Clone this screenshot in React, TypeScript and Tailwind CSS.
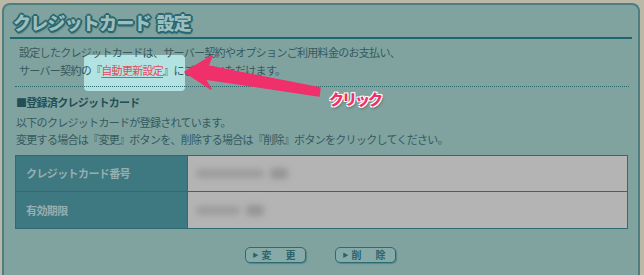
import React from 'react'

const font = '[font-family:"Noto_Sans_CJK_JP","Noto_Sans",sans-serif]'

function Blur({ w }: { w: number }) {
    return (
        <div className="flex items-center gap-[6px] blur-[3px]">
            <div className="h-[9px] bg-[#9c9c9c] rounded-sm" style={{ width: w }} />
            <div className="h-[11px] w-[18px] bg-[#959595] rounded-sm" />
        </div>
    )
}

export default function App() {
    return (
        <div className={`relative w-[644px] h-[275px] overflow-hidden bg-[#bcb8a7] pt-[3px] pl-[2px] pr-[4px] ${font}`}>
            <div className="relative h-[290px] rounded-t-[8px] border-2 border-b-0 border-[#4e7e82] bg-[#80a3a0]">
                {/* spotlight around the link */}
                <div className="absolute left-[80px] top-[50px] w-[101px] h-[36px] rounded-[4px] bg-[#b2e3e2]" />

                <div className="relative">
                    <h1 className="pl-[9px] pt-[5px] text-[18px] leading-[24px] font-black tracking-[-0.8px] text-[#9cbfbe] [text-shadow:2px_0_0_#2a6770,-2px_0_0_#2a6770,0_2px_0_#2a6770,0_-2px_0_#2a6770,1px_1px_0_#2a6770,-1px_-1px_0_#2a6770,1px_-1px_0_#2a6770,-1px_1px_0_#2a6770,1px_2px_2px_#2a6770]">
                        クレジットカード<span className="ml-[6px]">設定</span>
                    </h1>
                    <div className="mx-[6px] mt-[3px] h-[2px] bg-[#1c6670]" />

                    <div className="pl-[15px] mt-[4px] text-[11px] leading-[18px] tracking-[-0.7px] text-[#36595e]">
                        <p>設定したクレジットカードは、サーバー契約やオプションご利用料金のお支払い、</p>
                        <p>
                            サーバー契約の『
                            <span className="text-[#e8485a] underline underline-offset-2">自動更新設定</span>
                            』にご利用いただけます。
                        </p>
                    </div>

                    <div className="ml-[11px] mr-[9px] mt-[7px] border-t border-dotted border-[#2d6a70]" />

                    <h2 className="pl-[12px] mt-[7px] text-[11px] leading-[16px] font-bold tracking-[-0.7px] text-[#224f57]">
                        ■登録済クレジットカード
                    </h2>

                    <div className="pl-[12px] mt-[4px] text-[11px] leading-[17px] tracking-[-0.7px] text-[#36595e]">
                        <p>以下のクレジットカードが登録されています。</p>
                        <p>変更する場合は『変更』ボタンを、削除する場合は『削除』ボタンをクリックしてください。</p>
                    </div>

                    <div className="ml-[11px] mt-[7px] w-[613px] border border-[#2e6b73]">
                        <div className="flex h-[36px] border-b border-[#2e6b73]">
                            <div className="w-[171px] flex items-center pl-[10px] bg-[#3e7880] text-[11px] font-bold tracking-[-0.6px] text-[#97aeb0]">
                                クレジットカード番号
                            </div>
                            <div className="flex-1 flex items-center pl-[8px] bg-[#b4b4b4] border-l border-[#2e6b73]">
                                <Blur w={68} />
                            </div>
                        </div>
                        <div className="flex h-[36px]">
                            <div className="w-[171px] flex items-center pl-[10px] bg-[#3e7880] text-[11px] font-bold tracking-[-0.6px] text-[#97aeb0]">
                                有効期限
                            </div>
                            <div className="flex-1 flex items-center pl-[8px] bg-[#b4b4b4] border-l border-[#2e6b73]">
                                <Blur w={44} />
                            </div>
                        </div>
                    </div>

                    <div className="flex justify-center gap-[29px] mt-[18px] pr-[2px]">
                        {['変', '削'].map((a, i) => (
                            <button
                                key={a}
                                className="w-[61px] h-[16px] flex items-center pl-[7px] rounded-[5px] border-[1.5px] border-[#2d6b73] bg-[#86aaa8] shadow-[1px_1px_1px_#5a8486] text-[10px] font-bold text-[#2f6168] leading-none"
                            >
                                <span className="text-[6px] mr-[3px]">▶</span>
                                <span>{a}</span>
                                <span className="ml-[14px]">{i === 0 ? '更' : '除'}</span>
                            </button>
                        ))}
                    </div>
                </div>
            </div>

            {/* arrow annotation */}
            <svg className="absolute left-0 top-0" width="644" height="275" viewBox="0 0 644 275">
                <polygon
                    points="185,72 212,56 208,66 320,88 319,96 205,79 211,89"
                    fill="#f0306a"
                    stroke="#f0306a"
                    strokeLinejoin="round"
                    strokeWidth="1.5"
                />
            </svg>
            <div className="absolute left-[329px] top-[89px] text-[15px] leading-[20px] font-black tracking-[-2px] text-[#f0306a] [text-shadow:1px_1px_0_#fff,-1px_-1px_0_#fff,1px_-1px_0_#fff,-1px_1px_0_#fff,1px_2px_3px_#0006]">
                クリック
            </div>
        </div>
    )
}
